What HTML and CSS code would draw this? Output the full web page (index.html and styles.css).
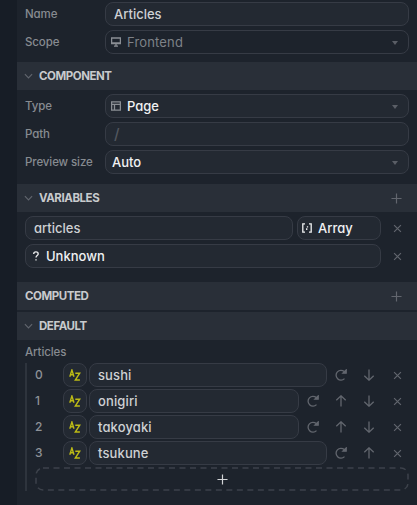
FILE: index.html
```html
<!DOCTYPE html>
<html lang="en">
<head>
<meta charset="utf-8">
<title>Articles</title>
<link rel="stylesheet" href="styles.css">
</head>
<body>
<svg class="defs" width="0" height="0">
  <symbol id="chev" viewBox="0 0 10 6"><path d="M1 1l4 4 4-4"/></symbol>
  <symbol id="x" viewBox="0 0 10 10"><path d="M1.2 1.2l7.6 7.6M8.8 1.2L1.2 8.8"/></symbol>
  <symbol id="plus" viewBox="0 0 12 12"><path d="M6 .5v11M.5 6h11"/></symbol>
  <symbol id="down" viewBox="0 0 12 12"><path d="M6 .5v10.7M1.3 6.7L6 11.2l4.7-4.5"/></symbol>
  <symbol id="up" viewBox="0 0 12 12"><path d="M6 11.5V.8M1.3 5.3L6 .8l4.7 4.5"/></symbol>
  <symbol id="reload" viewBox="0 0 12 12"><path d="M9.5 9.6A4.9 4.9 0 1 1 9.3 2.6L10.4 3.4"/><path fill="currentColor" d="M11.2 .9V4.2H7.9z"/></symbol>
  <symbol id="az" viewBox="0 0 12 12"><path d="M.8 7.8L2.9 1l2.1 6.8M1.5 5.8h2.8M6.3 4.2h4.4L6.3 11h4.6"/></symbol>
</svg>
<main class="panel">
  <section class="group first">
    <div class="row"><label>Name</label><div class="field">Articles</div></div>
    <div class="row"><label>Scope</label><div class="field select disabled"><svg class="kind muted" viewBox="0 0 10 10"><path d="M.6 1h8.8v5.6H.6zM3 9.2h4M5 6.6v2.6M1 6h8"/></svg><span>Frontend</span><i class="caret"></i></div></div>
  </section>
  <h2><svg class="chev"><use href="#chev"/></svg><span>COMPONENT</span></h2>
  <section class="group component">
    <div class="row"><label>Type</label><div class="field select"><svg class="kind muted" viewBox="0 0 10 10"><path d="M.6 .9h8.8v8.2H.6zM.6 3.4h8.8M3.5 3.4v5.7"/></svg><span>Page</span><i class="caret"></i></div></div>
    <div class="row"><label>Path</label><div class="field placeholder">/</div></div>
    <div class="row"><label>Preview size</label><div class="field select"><span>Auto</span><i class="caret"></i></div></div>
  </section>
  <h2><svg class="chev"><use href="#chev"/></svg><span>VARIABLES</span><svg class="add"><use href="#plus"/></svg></h2>
  <section class="group variables">
    <div class="row"><div class="field">articles</div><div class="field select type"><svg class="kind" viewBox="0 0 10 10"><path d="M3 .8H.8v8.4H3M7 .8h2.2v8.4H7M5.5 3.2v1.4M4.7 5.2v1.8"/></svg><span>Array</span></div><b class="act"><svg class="x"><use href="#x"/></svg></b></div>
    <div class="row"><div class="field select unknown"><svg class="kind" viewBox="0 0 10 10"><path d="M2.7 2.9C2.7.3 7.2.3 7.2 2.9 7.2 4.6 5 4.5 5 6.6M5 8.3v1.3"/></svg><span>Unknown</span></div><b class="act"><svg class="x"><use href="#x"/></svg></b></div>
  </section>
  <h2 class="computed"><span>COMPUTED</span><svg class="add"><use href="#plus"/></svg></h2>
  <h2><svg class="chev"><use href="#chev"/></svg><span>DEFAULT</span></h2>
  <label class="caption">Articles</label>
  <div class="list">
    <div class="item"><span class="idx">0</span><div class="az"><svg><use href="#az"/></svg></div><div class="field">sushi</div><b class="act"><svg><use href="#reload"/></svg></b><b class="act"><svg><use href="#down"/></svg></b><b class="act"><svg class="x"><use href="#x"/></svg></b></div>
    <div class="item"><span class="idx">1</span><div class="az"><svg><use href="#az"/></svg></div><div class="field">onigiri</div><b class="act"><svg><use href="#reload"/></svg></b><b class="act"><svg><use href="#up"/></svg></b><b class="act"><svg><use href="#down"/></svg></b><b class="act"><svg class="x"><use href="#x"/></svg></b></div>
    <div class="item"><span class="idx">2</span><div class="az"><svg><use href="#az"/></svg></div><div class="field">takoyaki</div><b class="act"><svg><use href="#reload"/></svg></b><b class="act"><svg><use href="#up"/></svg></b><b class="act"><svg><use href="#down"/></svg></b><b class="act"><svg class="x"><use href="#x"/></svg></b></div>
    <div class="item"><span class="idx">3</span><div class="az"><svg><use href="#az"/></svg></div><div class="field">tsukune</div><b class="act"><svg><use href="#reload"/></svg></b><b class="act"><svg><use href="#up"/></svg></b><b class="act"><svg class="x"><use href="#x"/></svg></b></div>
    <div class="new"><svg class="outline"><rect x="1" y="1" width="372" height="22" rx="7"/></svg><svg class="plus"><use href="#plus"/></svg></div>
  </div>
</main>
</body>
</html>
```
FILE: styles.css
```css
* { box-sizing: border-box; }
body {
  margin: 0;
  height: 505px;
  overflow: hidden;
  padding-left: 17px;
  background: #171d26;
  font: 500 13px/22px Inter, "Open Sans", sans-serif;
  font-feature-settings: "cv11";
  color: #cfd1d4;
}
svg { fill: none; stroke: currentColor; stroke-width: 1.3; display: block; flex: none; }
.defs { position: absolute; }
.panel { height: 505px; background: #1d232c; padding-top: 2px; }
.group { display: flex; flex-direction: column; gap: 4px; padding: 4px 8px; }
.first { padding-top: 0; padding-bottom: 8px; }
.component { padding-bottom: 10px; }
.variables { padding-bottom: 14px; }
.row, .item { display: flex; height: 24px; }
.row > label { width: 80px; line-height: 24px; }
label { font-size: 11.5px; color: #878b91; letter-spacing: -.1px; white-space: nowrap; }
.field {
  flex: 1;
  min-width: 0;
  border: 1px solid #363b45;
  border-radius: 8px;
  background: #232932;
  padding-left: 8px;
}
.select { display: flex; align-items: center; padding-left: 6px; color: #f0f1f2; }
.disabled { background: #1d232c; color: #7e8288; font-weight: 400; letter-spacing: .15px; }
.kind { width: 10px; height: 10px; margin: 0 6px 0 -1px; }
.unknown .kind { margin-right: 5px; }
.muted { color: #8a8e94; }
.caret { margin: 1px 10px 0 auto; border: 3px solid transparent; border-top: 4px solid #5a5e66; border-bottom: 0; }
.placeholder { color: #52575f; font-size: 15px; }
.type { flex: 0 0 84px; margin-left: 4px; padding-left: 5px; }
h2 {
  display: flex;
  align-items: center;
  height: 28px;
  margin: 0;
  padding: 0 15px 0 7px;
  background: #292f38;
  font-size: 11.5px;
  font-weight: 700;
  letter-spacing: -.45px;
  color: #c8cacd;
}
.computed { margin-bottom: 2px; padding-left: 8px; }
.chev { width: 9px; height: 6px; margin-right: 6px; color: #60656d; }
.add { width: 11px; height: 11px; margin-left: auto; color: #62666e; }
.act { flex: none; width: 28px; display: grid; place-items: center; color: #62666e; }
.act svg { width: 12px; height: 12px; }
.act .x { width: 9px; height: 9px; }
.row .act { width: 32px; margin-right: -4px; }
.caption { display: block; padding-left: 8px; height: 23px; line-height: 25px; }
.list { margin: 0 8px; padding-left: 8px; border-left: 2px solid #2e343d; display: flex; flex-direction: column; gap: 2px; }
.item { margin-right: -2px; }
.item .field { letter-spacing: .12px; }
.idx { width: 28px; line-height: 24px; color: #8d9197; font-size: 12px; }
.az { width: 24px; border: 1px solid #363b45; border-radius: 8px; background: #232932; margin-right: 2px; display: grid; place-items: center; color: #bdbb16; }
.az svg { width: 12px; height: 12px; stroke-width: 1.4; }
.new { height: 24px; display: grid; place-items: center; color: #d2d4d7; }
.new > svg { grid-area: 1 / 1; }
.outline { width: 374px; height: 24px; color: #3d424b; stroke-width: 1.5; stroke-dasharray: 6 4.5; }
.plus { width: 11px; height: 11px; }
```
